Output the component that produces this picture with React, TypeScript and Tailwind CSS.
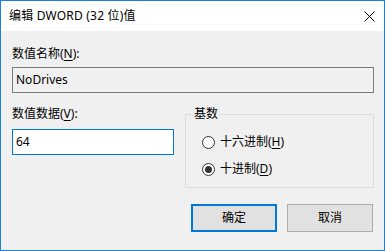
import React from "react";

const font = { fontFamily: '"Noto Sans", "Noto Sans CJK SC", sans-serif' };

function U({ children }: { children: React.ReactNode }) {
  return <span className="underline underline-offset-2">{children}</span>;
}

function Radio({ checked, children }: { checked?: boolean; children: React.ReactNode }) {
  return (
    <div className="flex h-[16px] items-center">
      <span className="flex h-[13px] w-[13px] items-center justify-center rounded-full border border-[#333333] bg-white">
        {checked && <span className="h-[7px] w-[7px] rounded-full bg-[#333333]" />}
      </span>
      <span className="ml-[5px]">{children}</span>
    </div>
  );
}

export default function App() {
  return (
    <div
      className="flex h-[251px] w-[385px] flex-col border border-[#1883d7] bg-[#f0f0f0] text-[12px] leading-[16px] text-black"
      style={font}
    >
      {/* Title bar */}
      <div className="flex h-[30px] items-center justify-between bg-white pl-[8px] pr-[9px]">
        <span className="tracking-[0.2px]">编辑 DWORD (32 位)值</span>
        <svg width="11" height="11" viewBox="0 0 11 11" fill="none" stroke="#000" strokeWidth="1">
          <path d="M0.5 0.5 L10.5 10.5 M10.5 0.5 L0.5 10.5" />
        </svg>
      </div>

      <div className="flex flex-col pl-[11px] pr-[10px] pt-[15px]">
        <div>
          数值名称(<U>N</U>):
        </div>
        <div className="mt-[5px] flex h-[26px] items-center border border-[#7a7a7a] bg-[#f0f0f0] px-[3px]">
          NoDrives
        </div>

        <div className="mt-[13px] flex items-start gap-[11px]">
          <div className="flex w-[162px] flex-col">
            <div>
              数值数据(<U>V</U>):
            </div>
            <div className="mt-[7px] flex h-[26px] items-center border border-[#0078d7] bg-white px-[3px]">
              64
            </div>
          </div>

          <fieldset className="flex-1 border border-[#dcdcdc] pb-[10px]">
            <legend className="ml-[7px] px-[1px]">基数</legend>
            <div className="mt-[12px] flex flex-col gap-[11px] pl-[16px]">
              <Radio>
                十六进制(<U>H</U>)
              </Radio>
              <Radio checked>
                十进制(<U>D</U>)
              </Radio>
            </div>
          </fieldset>
        </div>

        <div className="mt-[16px] flex justify-end gap-[10px] pr-[1px]">
          <button className="flex h-[28px] w-[86px] items-center justify-center border-2 border-[#0078d7] bg-[#e1e1e1]">
            确定
          </button>
          <button className="flex h-[28px] w-[86px] items-center justify-center border border-[#adadad] bg-[#e1e1e1]">
            取消
          </button>
        </div>
      </div>
    </div>
  );
}
